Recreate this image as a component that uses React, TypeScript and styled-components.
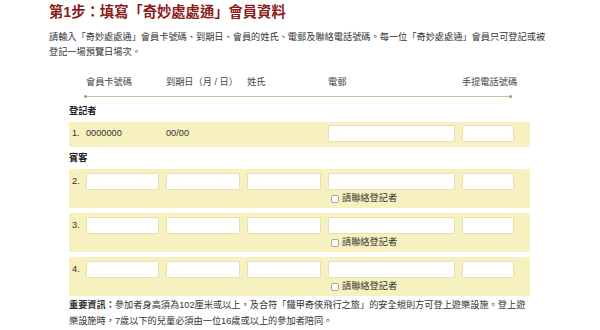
import React from 'react';
import styled, { createGlobalStyle } from 'styled-components';

const GlobalStyle = createGlobalStyle`
  body {
    margin: 0;
    background: #fff;
    font-family: "Liberation Sans", "Noto Sans CJK TC", sans-serif;
    color: #333;
  }
`;

const Page = styled.div`
  width: 600px;
  height: 330px;
  padding: 3px 0 0 49px;
  box-sizing: border-box;
  overflow: hidden;
`;

const Title = styled.h1`
  margin: 0;
  font-size: 14.3px;
  line-height: 18px;
  font-weight: bold;
  color: #8b1c1c;
`;

const Intro = styled.p`
  margin: 8.5px 0 0;
  width: 500px;
  font-size: 9.2px;
  line-height: 15px;
`;

const Form = styled.div`
  margin: 15.5px 0 0 20px;
  width: 461px;
`;

const Columns = styled.div`
  display: grid;
  grid-template-columns: 7px 73px 74px 74px 127px 52px;
  column-gap: 7px;
  padding-left: 3px;
`;

const HeaderRow = styled(Columns)`
  font-size: 9.2px;
  line-height: 14px;
  color: #444;
  white-space: nowrap;
`;

const Rule = styled.div`
  position: relative;
  margin: 7px 0 0 16px;
  width: 426px;
  height: 1px;
  background: #cfc4a8;

  &::before,
  &::after {
    content: '';
    position: absolute;
    top: -1px;
    width: 3px;
    height: 3px;
    border-radius: 50%;
    background: #a99a68;
  }
  &::before { left: -1px; }
  &::after { right: -1px; }
`;

const SectionLabel = styled.div<{ $top: number }>`
  margin-top: ${({ $top }) => $top}px;
  font-size: 9.2px;
  line-height: 14px;
  font-weight: bold;
  color: #222;
`;

const Band = styled(Columns)<{ $tall?: boolean }>`
  margin-top: 4px;
  background: #f7f0bf;
  padding-top: ${({ $tall }) => ($tall ? 4 : 3)}px;
  padding-bottom: ${({ $tall }) => ($tall ? 3 : 5)}px;
  grid-auto-rows: auto;
  align-items: center;
  font-size: 9.2px;
  color: #333;

  & + & {
    margin-top: 5px;
  }
`;

const Num = styled.span`
  line-height: 17px;
  align-self: start;
  white-space: nowrap;
`;

const Cell = styled.span`
  line-height: 17px;
  white-space: nowrap;
`;

const Field = styled.input`
  display: block;
  box-sizing: border-box;
  width: 100%;
  height: 17px;
  margin: 0;
  padding: 0 3px;
  background: #fff;
  border: 1px solid #e7e0b3;
  border-radius: 1px;
  font: inherit;
  outline: none;
`;

const Contact = styled.label`
  grid-column: 5 / span 2;
  display: flex;
  align-items: center;
  gap: 3px;
  margin-top: 2px;
  padding-left: 3px;
  line-height: 13px;
  font-size: 9.2px;
  color: #333;
`;

const Check = styled.input`
  appearance: none;
  width: 8px;
  height: 8px;
  margin: 0;
  background: #fff;
  border: 1px solid #a8a8a8;
  border-radius: 2px;
`;

const Note = styled.p`
  margin: 1px 0 0;
  font-size: 9.2px;
  line-height: 16px;
  color: #333;
`;

const headers = ['會員卡號碼', '到期日（月 / 日）', '姓氏', '電郵', '手提電話號碼'];

export default function App() {
  return (
    <Page>
      <GlobalStyle />
      <Title>第1步：填寫「奇妙處處通」會員資料</Title>
      <Intro>
        請輸入「奇妙處處通」會員卡號碼、到期日、會員的姓氏、電郵及聯絡電話號碼。每一位「奇妙處處通」會員只可登記或被登記一場預覽日場次。
      </Intro>
      <Form>
        <HeaderRow>
          <span />
          {headers.map((h) => (
            <span key={h}>{h}</span>
          ))}
        </HeaderRow>
        <Rule />
        <SectionLabel $top={7}>登記者</SectionLabel>
        <Band>
          <Num>1.</Num>
          <Cell>0000000</Cell>
          <Cell>00/00</Cell>
          <span />
          <Field />
          <Field />
        </Band>
        <SectionLabel $top={4}>賓客</SectionLabel>
        {[2, 3, 4].map((n) => (
          <Band key={n} $tall>
            <Num>{n}.</Num>
            <Field />
            <Field />
            <Field />
            <Field />
            <Field />
            <Contact>
              <Check type="checkbox" />
              請聯絡登記者
            </Contact>
          </Band>
        ))}
        <Note>
          <b>重要資訊：</b>參加者身高須為102厘米或以上，及合符「鐵甲奇俠飛行之旅」的安全規則方可登上遊樂設施。登上遊樂設施時，7歲以下的兒童必須由一位16歲或以上的參加者陪同。
        </Note>
      </Form>
    </Page>
  );
}
